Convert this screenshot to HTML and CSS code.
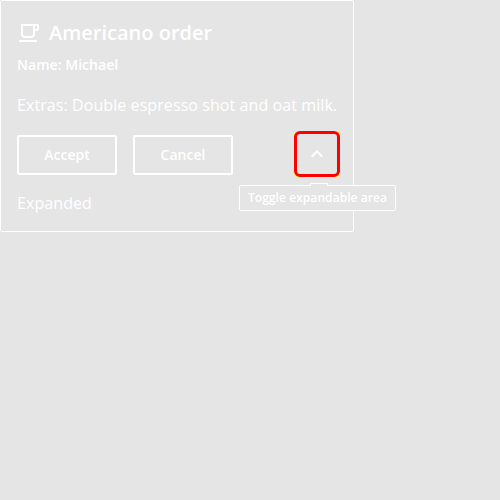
FILE: index.html
```html
<!DOCTYPE html>
<html lang="en">
<head>
<meta charset="utf-8">
<title>Americano order</title>
<link rel="stylesheet" href="styles.css">
</head>
<body>
<article class="card">
  <header class="head">
    <svg class="cup" viewBox="0 0 24 24"><path fill="currentColor" d="M20 3H4v10c0 2.210 1.790 4 4 4h6c2.210 0 4-1.790 4-4v-3h2c1.110 0 2-.9 2-2V5c0-1.110-.89-2-2-2zm-4 10c0 1.100-.9 2-2 2H8c-1.100 0-2-.9-2-2V5h10v8zm4-5h-2V5h2v3zM2 19h18v2H2z"/></svg>
    <h1 class="title">Americano order</h1>
  </header>
  <p class="name">Name: Michael</p>
  <p class="text">Extras: Double espresso shot and oat milk.</p>
  <div class="actions">
    <button class="btn">Accept</button>
    <button class="btn">Cancel</button>
    <div class="toggle-wrap">
      <button class="toggle" aria-label="Toggle expandable area"><svg class="chevron" viewBox="0 0 24 24"><path fill="currentColor" d="M12 8l-6 6 1.410 1.410L12 10.830l4.590 4.580L18 14z"/></svg></button>
      <div class="tooltip" role="tooltip">Toggle expandable area</div>
    </div>
  </div>
  <p class="text expanded">Expanded</p>
</article>
</body>
</html>
```
FILE: styles.css
```css
*, *::before { box-sizing: border-box; }
body {
  margin: 0;
  background: #e5e5e5;
  color: #fff;
  font-family: "Open Sans", sans-serif;
}
.card {
  width: 354px;
  height: 232px;
  padding: 20px 16px 0;
  border: 1px solid #fff;
  border-radius: 2px;
}
.head { display: flex; align-items: center; gap: 8px; height: 24px; }
.cup { width: 24px; height: 24px; }
.title { margin: 0; font-size: 20px; line-height: 24px; font-weight: 600; }
.name { margin: 8px 0 0; font-size: 14px; line-height: 24px; font-weight: 600; letter-spacing: 0.04px; }
.text { margin: 16px 0 0; font-size: 16px; line-height: 24px; letter-spacing: 0.08px; white-space: nowrap; }
.actions { display: flex; gap: 16px; margin-top: 18px; height: 40px; }
.btn {
  width: 100px;
  height: 40px;
  padding: 0;
  border: 2px solid #fff;
  border-radius: 2px;
  background: none;
  color: inherit;
  font: 600 14px/20px "Open Sans", sans-serif;
  letter-spacing: 0.04px;
}
.toggle-wrap { position: relative; margin: -4px -3px 0 auto; height: 46px; }
.toggle {
  position: relative;
  display: grid;
  place-items: center;
  width: 46px;
  height: 46px;
  padding: 0;
  border: 3px solid #f00;
  border-radius: 6px;
  background: none;
  color: inherit;
}
/* focus ring edge, visible only at the corners */
.toggle::before {
  content: "";
  position: absolute;
  inset: -3px;
  z-index: -1;
  border: 3px solid #ff0;
  border-radius: 4.5px;
}
.chevron { width: 24px; height: 24px; }
.tooltip {
  position: absolute;
  top: 54px;
  left: -55px;
  width: 157px;
  height: 26px;
  border: 1px solid #fff;
  border-radius: 2px;
  background: #e5e5e5;
  font-size: 12px;
  line-height: 24px;
  font-weight: 600;
  letter-spacing: 0.07px;
  text-align: center;
  white-space: nowrap;
}
.tooltip::before {
  content: "";
  position: absolute;
  top: -3px;
  left: 70px;
  width: 18px;
  height: 3px;
  border: 1px solid #fff;
  border-bottom: 0;
  border-radius: 1px 1px 0 0;
  background: #e5e5e5;
}
.expanded { margin-top: 16px; }
```
